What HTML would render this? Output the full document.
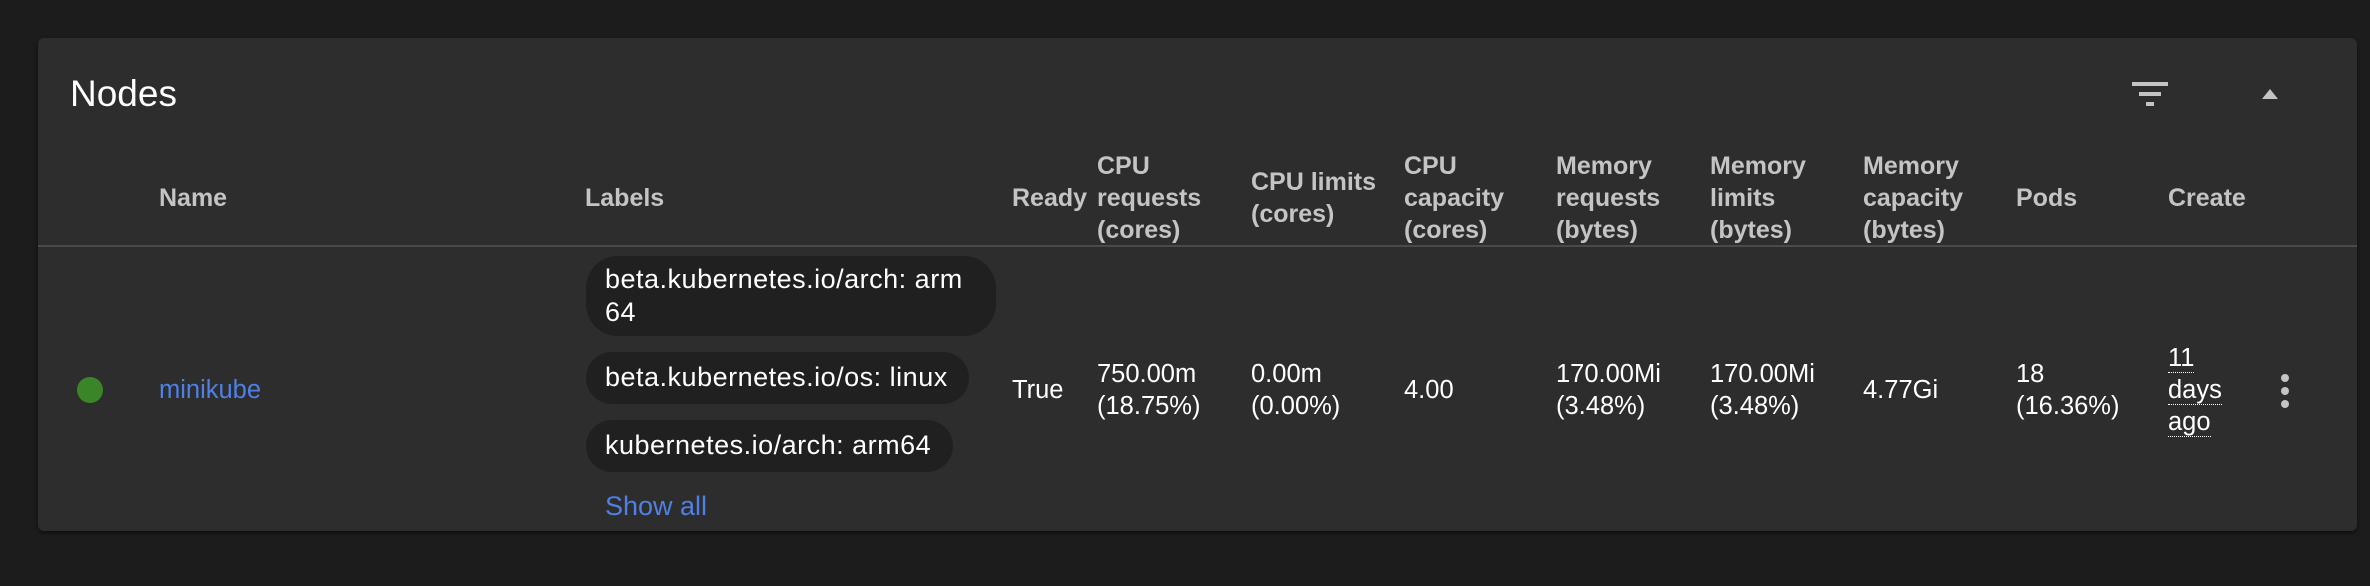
<!DOCTYPE html>
<html><head><meta charset="utf-8"><style>
*{margin:0;padding:0;box-sizing:border-box}
body{width:2370px;height:586px;background:#1c1c1c;font-family:"Liberation Sans",sans-serif;position:relative;overflow:hidden}
.card{position:absolute;left:38px;top:38px;width:2319px;height:493px;background:#2d2d2d;border-radius:6px;box-shadow:0 2px 4px rgba(0,0,0,.5)}
.a{position:absolute}
.h{color:#c4c4c4;font-weight:bold;font-size:25px;line-height:32px;white-space:nowrap}
.c{color:#fff;font-size:25.5px;line-height:32px;white-space:nowrap}
.chip{position:absolute;left:586px;background:#202020;border-radius:28px;color:#fff;font-size:27px;line-height:33px;padding:0 0 0 19px;letter-spacing:0.5px;white-space:nowrap}
.line{position:absolute;left:38px;top:245px;width:2319px;height:2px;background:#4a4a4a}
</style></head><body>
<div class="card"></div>
<div class="a" style="left:70px;top:72px;color:#fff;font-size:37px;line-height:44px">Nodes</div>
<svg class="a" style="left:2132px;top:82px" width="36" height="26" viewBox="0 0 36 26"><rect x="0" y="0" width="36" height="4" fill="#c4c4c4"/><rect x="7" y="10" width="22" height="4" fill="#c4c4c4"/><rect x="14" y="20" width="8" height="4" fill="#c4c4c4"/></svg>
<svg class="a" style="left:2262px;top:89px" width="16" height="10" viewBox="0 0 16 10"><path d="M0 10L8 0L16 10Z" fill="#c4c4c4"/></svg>

<div class="a h" style="left:159px;top:182px">Name</div>
<div class="a h" style="left:585px;top:182px">Labels</div>
<div class="a h" style="left:1012px;top:182px">Ready</div>
<div class="a h" style="left:1097px;top:150px">CPU<br>requests<br>(cores)</div>
<div class="a h" style="left:1251px;top:166px">CPU limits<br>(cores)</div>
<div class="a h" style="left:1404px;top:150px">CPU<br>capacity<br>(cores)</div>
<div class="a h" style="left:1556px;top:150px">Memory<br>requests<br>(bytes)</div>
<div class="a h" style="left:1710px;top:150px">Memory<br>limits<br>(bytes)</div>
<div class="a h" style="left:1863px;top:150px">Memory<br>capacity<br>(bytes)</div>
<div class="a h" style="left:2016px;top:182px">Pods</div>
<div class="a h" style="left:2168px;top:182px;width:79px;overflow:hidden">Created</div>
<div class="line"></div>

<div class="a" style="left:77px;top:377px;width:26px;height:26px;border-radius:50%;background:#3a8528"></div>
<div class="a c" style="left:159px;top:374px;color:#4e80e6">minikube</div>
<div class="chip" style="top:256px;width:410px;height:80px;padding-top:7px;border-radius:32px">beta.kubernetes.io/arch: arm<br>64</div>
<div class="chip" style="top:352px;width:383px;height:52px;padding-top:9px">beta.kubernetes.io/os: linux</div>
<div class="chip" style="top:420px;width:367px;height:52px;padding-top:9px">kubernetes.io/arch: arm64</div>
<div class="a c" style="left:605px;top:490px;color:#4e80e6;font-size:27px">Show all</div>
<div class="a c" style="left:1012px;top:374px">True</div>
<div class="a c" style="left:1097px;top:358px">750.00m<br>(18.75%)</div>
<div class="a c" style="left:1251px;top:358px">0.00m<br>(0.00%)</div>
<div class="a c" style="left:1404px;top:374px">4.00</div>
<div class="a c" style="left:1556px;top:358px">170.00Mi<br>(3.48%)</div>
<div class="a c" style="left:1710px;top:358px">170.00Mi<br>(3.48%)</div>
<div class="a c" style="left:1863px;top:374px">4.77Gi</div>
<div class="a c" style="left:2016px;top:358px">18<br>(16.36%)</div>
<div class="a c" style="left:2168px;top:342px"><span style="border-bottom:1px dotted #fff">11</span><br><span style="border-bottom:1px dotted #fff">days</span><br><span style="border-bottom:1px dotted #fff">ago</span></div>
<svg class="a" style="left:2280px;top:374px" width="10" height="34" viewBox="0 0 10 34"><circle cx="5" cy="4" r="4" fill="#c4c4c4"/><circle cx="5" cy="17" r="4" fill="#c4c4c4"/><circle cx="5" cy="30" r="4" fill="#c4c4c4"/></svg>
</body></html>
